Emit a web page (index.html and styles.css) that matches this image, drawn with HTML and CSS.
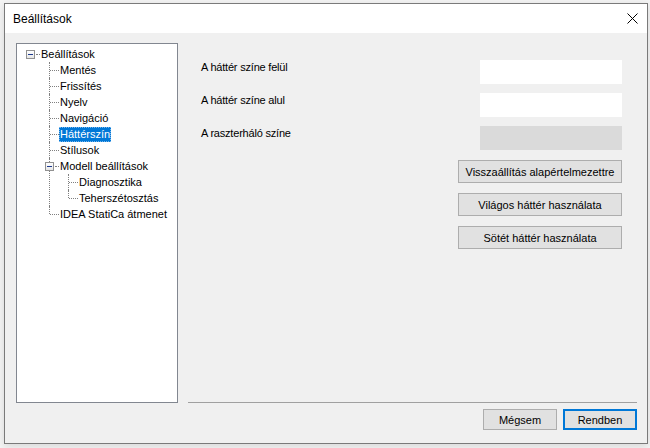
FILE: index.html
```html
<!DOCTYPE html>
<html lang="hu">
<head>
<meta charset="utf-8">
<title>Beállítások</title>
<link rel="stylesheet" href="styles.css">
</head>
<body>
<div class="window">
  <div class="titlebar">
    <span class="title">Beállítások</span>
    <svg class="close" width="11" height="11" viewBox="0 0 11 11"><path d="M0.5 0.5 L10.5 10.5 M10.5 0.5 L0.5 10.5" stroke="#000" stroke-width="1" fill="none"/></svg>
  </div>
  <div class="body">
    <div class="tree">
      <ul class="root">
        <li class="open">
          <div class="row"><span class="exp"></span><span class="lbl">Beállítások</span></div>
          <ul>
            <li><div class="row"><span class="lbl">Mentés</span></div></li>
            <li><div class="row"><span class="lbl">Frissítés</span></div></li>
            <li><div class="row"><span class="lbl">Nyelv</span></div></li>
            <li><div class="row"><span class="lbl">Navigáció</span></div></li>
            <li><div class="row"><span class="lbl sel">Háttérszín</span></div></li>
            <li><div class="row"><span class="lbl">Stílusok</span></div></li>
            <li class="open">
              <div class="row"><span class="exp"></span><span class="lbl">Modell beállítások</span></div>
              <ul>
                <li><div class="row"><span class="lbl">Diagnosztika</span></div></li>
                <li><div class="row"><span class="lbl">Teherszétosztás</span></div></li>
              </ul>
            </li>
            <li><div class="row"><span class="lbl">IDEA StatiCa átmenet</span></div></li>
          </ul>
        </li>
      </ul>
    </div>
    <div class="panel">
      <div class="field first"><span class="label">A háttér színe felül</span><span class="swatch white"></span></div>
      <div class="field"><span class="label">A háttér színe alul</span><span class="swatch white"></span></div>
      <div class="field third"><span class="label">A raszterháló színe</span><span class="swatch grey"></span></div>
      <div class="actions">
        <button class="btn wide">Visszaállítás alapértelmezettre</button>
        <button class="btn wide">Világos háttér használata</button>
        <button class="btn wide">Sötét háttér használata</button>
      </div>
    </div>
    <div class="footer">
      <button class="btn small">Mégsem</button>
      <button class="btn small default">Rendben</button>
    </div>
  </div>
</div>
</body>
</html>
```

FILE: styles.css
```css
* { box-sizing: border-box; }
html, body { margin: 0; padding: 0; }
body {
  width: 650px;
  height: 448px;
  overflow: hidden;
  background: #f4f4f4;
  font-family: "Liberation Sans", Arial, sans-serif;
  font-size: 11px;
  color: #000;
}
.window {
  margin: 3px 0 0 4px;
  width: 644px;
  height: 441px;
  border: 1px solid #7a7a7a;
  background: #f0f0f0;
  display: flex;
  flex-direction: column;
  box-shadow: 0 2px 8px rgba(0,0,0,0.12);
}
.titlebar {
  height: 29px;
  background: #fff;
  display: flex;
  align-items: center;
  justify-content: space-between;
  padding: 0 9px 0 8px;
}
.title { font-size: 12px; padding-top: 1px; }
.close { display: block; margin-top: 0; }
.body {
  flex: 1;
  padding: 10px 10px 0 11px;
  display: grid;
  grid-template-columns: 162px 449px;
  grid-template-rows: 360px auto;
  column-gap: 10px;
}
.tree {
  background: #fff;
  border: 1px solid #828790;
  padding-top: 2px;
  padding-left: 0;
}
.tree ul { list-style: none; margin: 0; padding: 0; }
.tree ul ul { margin-left: 19px; }
.tree li { position: relative; }
.row {
  position: relative;
  height: 16px;
  line-height: 16px;
  padding-left: 24px;
  white-space: nowrap;
}
.tree ul ul > li::after {
  content: "";
  position: absolute;
  left: 13px;
  top: 0;
  bottom: 0;
  border-left: 1px dotted #808080;
}
.tree ul ul > li:last-child::after { bottom: auto; height: 8px; }
.tree ul ul > li > .row::before {
  content: "";
  position: absolute;
  left: 14px;
  top: 8px;
  width: 9px;
  border-top: 1px dotted #808080;
}
.root > li > .row::before {
  content: "";
  position: absolute;
  left: 19px;
  top: 8px;
  width: 4px;
  border-top: 1px dotted #808080;
}
.exp {
  position: absolute;
  z-index: 1;
  left: 9px;
  top: 4px;
  width: 9px;
  height: 9px;
  border: 1px solid #919191;
  background: linear-gradient(#ffffff, #e6e6e6);
}
.exp::after {
  content: "";
  position: absolute;
  left: 1px;
  top: 3px;
  width: 5px;
  height: 1px;
  background: #1d3a8f;
}
.tree ul ul > li.open > .row::before { left: 19px; width: 4px; }
.lbl { display: inline-block; height: 15px; line-height: 15px; padding: 0 1px; margin-left: -1px; }
.lbl.sel { background: #0078d7; color: #fff; outline: 1px dotted #7ab6ea; outline-offset: -1px; }
.panel {
  border-bottom: 1px solid #a0a0a0;
  padding: 17px 15px 0 13px;
  display: flex;
  flex-direction: column;
}
.field {
  display: flex;
  justify-content: space-between;
  align-items: flex-start;
  height: 24px;
  margin-bottom: 9px;
}
.field.third { margin-bottom: 10px; }
.label { line-height: 14px; letter-spacing: -0.2px; }
.swatch { width: 142px; height: 24px; }
.swatch.white { background: #fff; }
.swatch.grey { background: #dadada; }
.actions {
  display: flex;
  flex-direction: column;
  align-items: flex-end;
  gap: 10px;
}
.btn {
  font-family: "Liberation Sans", Arial, sans-serif;
  font-size: 11px;
  color: #000;
  background: #e1e1e1;
  border: 1px solid #adadad;
  padding: 0;
  margin: 0;
}
.btn.wide { width: 164px; height: 23px; }
.footer {
  grid-column: 1 / -1;
  display: flex;
  justify-content: flex-end;
  gap: 6px;
  margin-top: 6px;
}
.btn.small { width: 74px; height: 21px; }
.btn.default { border: 2px solid #0078d7; }
```
